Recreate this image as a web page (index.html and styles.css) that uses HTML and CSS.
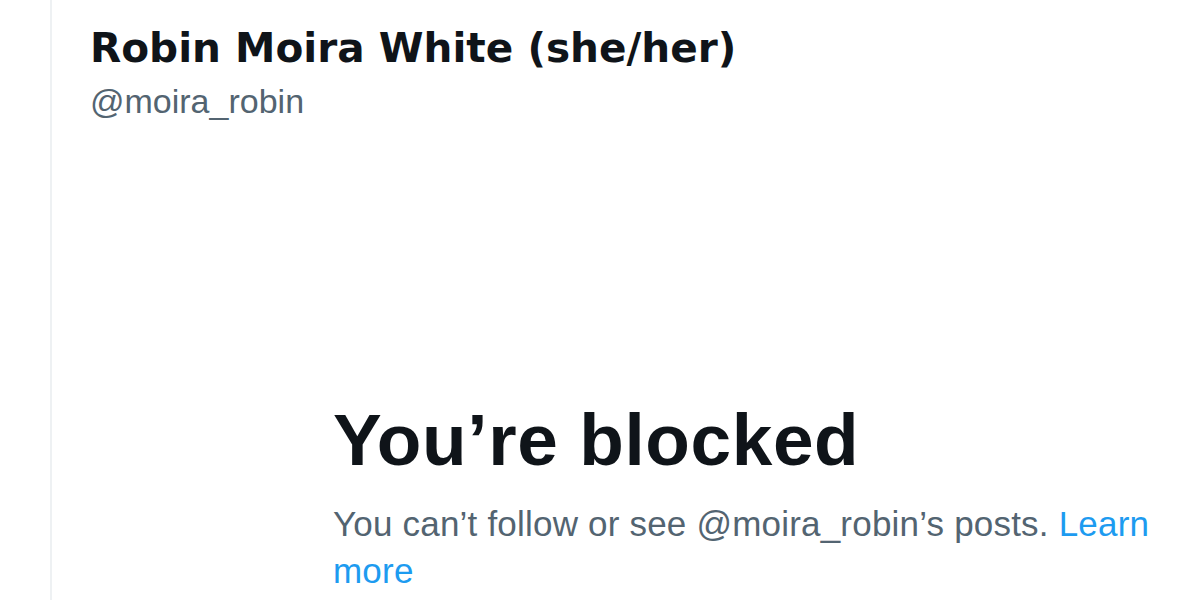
FILE: index.html
```html
<!DOCTYPE html>
<html lang="en">
<head>
<meta charset="utf-8">
<title>Robin Moira White (she/her)</title>
<link rel="stylesheet" href="styles.css">
</head>
<body>
  <main class="column">
    <header class="profile-header">
      <h1 class="name">Robin Moira White (she/her)</h1>
      <div class="handle">@moira_robin</div>
    </header>
    <section class="blocked">
      <h2 class="blocked-title">You’re blocked</h2>
      <p class="blocked-text">You can’t follow or see @moira_robin’s posts. <a class="link" href="#">Learn more</a></p>
    </section>
  </main>
</body>
</html>
```
FILE: styles.css
```css
html, body {
  margin: 0;
  padding: 0;
  background: #ffffff;
  height: 100%;
  overflow: hidden;
}

.column {
  margin-left: 50px;
  border-left: 2px solid #eef1f3;
  min-height: 600px;
  box-sizing: border-box;
}

.profile-header {
  padding: 24px 0 0 38px;
}

.name {
  margin: 0;
  font-family: "DejaVu Sans", sans-serif;
  font-weight: 700;
  font-size: 40.6px;
  line-height: 48px;
  color: #0f1419;
}

.handle {
  margin-top: 9px;
  padding-left: 0;
  font-family: "Liberation Sans", Arial, sans-serif;
  font-size: 34px;
  line-height: 40px;
  color: #536471;
}

.blocked {
  margin-left: 281px;
  margin-top: 278px;
  width: 860px;
}

.blocked-title {
  margin: 0;
  font-family: "Liberation Sans", Arial, sans-serif;
  font-weight: 700;
  font-size: 73px;
  line-height: 82px;
  letter-spacing: 0.6px;
  color: #0f1419;
}

.blocked-text {
  margin: 19px 0 0;
  font-family: "Liberation Sans", Arial, sans-serif;
  font-size: 35px;
  line-height: 47px;
  letter-spacing: 0.2px;
  color: #536471;
}

.link {
  color: #1d9bf0;
  text-decoration: none;
}
```
